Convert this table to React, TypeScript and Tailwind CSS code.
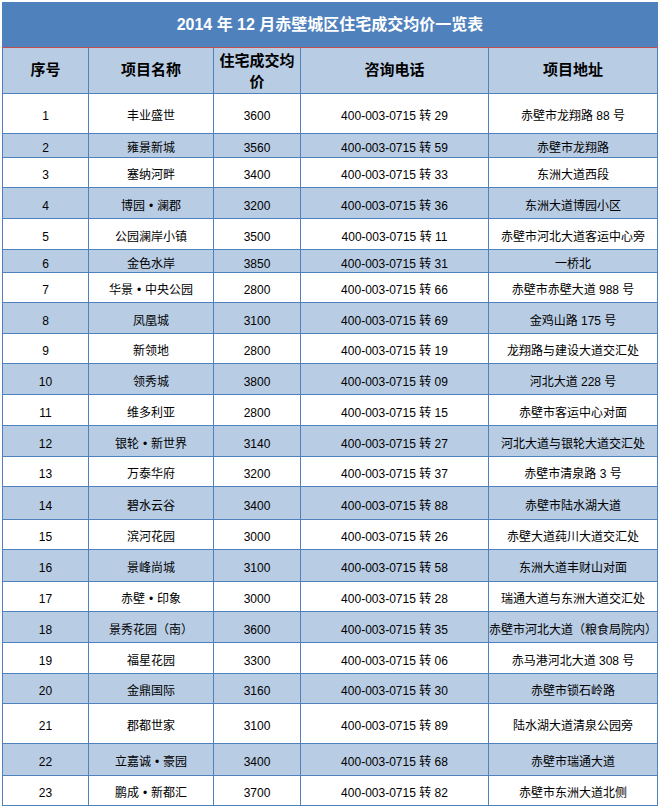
import React from "react";

type Row = {
  no: number;
  name: string;
  price: string;
  ext: string;
  addr: string;
  h: string;
};

// row heights include the 1px bottom rule
const rows: Row[] = [
  { no: 1, name: "丰业盛世", price: "3600", ext: "29", addr: "赤壁市龙翔路 88 号", h: "h-[40px]" },
  { no: 2, name: "雍景新城", price: "3560", ext: "59", addr: "赤壁市龙翔路", h: "h-[24px]" },
  { no: 3, name: "塞纳河畔", price: "3400", ext: "33", addr: "东洲大道西段", h: "h-[30px]" },
  { no: 4, name: "博园•澜郡", price: "3200", ext: "36", addr: "东洲大道博园小区", h: "h-[31px]" },
  { no: 5, name: "公园澜岸小镇", price: "3500", ext: "11", addr: "赤壁市河北大道客运中心旁", h: "h-[31px]" },
  { no: 6, name: "金色水岸", price: "3850", ext: "31", addr: "一桥北", h: "h-[23px]" },
  { no: 7, name: "华景•中央公园", price: "2800", ext: "66", addr: "赤壁市赤壁大道 988 号", h: "h-[30px]" },
  { no: 8, name: "凤凰城", price: "3100", ext: "69", addr: "金鸡山路 175 号", h: "h-[31px]" },
  { no: 9, name: "新领地", price: "2800", ext: "19", addr: "龙翔路与建设大道交汇处", h: "h-[30px]" },
  { no: 10, name: "领秀城", price: "3800", ext: "09", addr: "河北大道 228 号", h: "h-[31px]" },
  { no: 11, name: "维多利亚", price: "2800", ext: "15", addr: "赤壁市客运中心对面", h: "h-[31px]" },
  { no: 12, name: "银轮•新世界", price: "3140", ext: "27", addr: "河北大道与银轮大道交汇处", h: "h-[31px]" },
  { no: 13, name: "万泰华府", price: "3200", ext: "37", addr: "赤壁市清泉路 3 号", h: "h-[30px]" },
  { no: 14, name: "碧水云谷", price: "3400", ext: "88", addr: "赤壁市陆水湖大道", h: "h-[33px]" },
  { no: 15, name: "滨河花园", price: "3000", ext: "26", addr: "赤壁大道莼川大道交汇处", h: "h-[30px]" },
  { no: 16, name: "景峰尚城", price: "3100", ext: "58", addr: "东洲大道丰财山对面", h: "h-[32px]" },
  { no: 17, name: "赤壁•印象", price: "3000", ext: "28", addr: "瑞通大道与东洲大道交汇处", h: "h-[30px]" },
  { no: 18, name: "景秀花园（南）", price: "3600", ext: "35", addr: "赤壁市河北大道（粮食局院内）", h: "h-[31px]" },
  { no: 19, name: "福星花园", price: "3300", ext: "06", addr: "赤马港河北大道 308 号", h: "h-[31px]" },
  { no: 20, name: "金鼎国际", price: "3160", ext: "30", addr: "赤壁市锁石岭路", h: "h-[30px]" },
  { no: 21, name: "郡都世家", price: "3100", ext: "89", addr: "陆水湖大道清泉公园旁", h: "h-[40px]" },
  { no: 22, name: "立嘉诚•豪园", price: "3400", ext: "68", addr: "赤壁市瑞通大道", h: "h-[32px]" },
  { no: 23, name: "鹏成•新都汇", price: "3700", ext: "82", addr: "赤壁市东洲大道北侧", h: "h-[30px]" },
];

const cols = "grid grid-cols-[86px_125px_87px_188px_169px]";
const cell = "flex items-center justify-center border-r border-[#4f81bd] whitespace-nowrap overflow-hidden";

// the bullet sits in a full-width slot, as in the sheet
const Name = ({ text }: { text: string }) => {
  const parts = text.split("•");
  if (parts.length < 2) return <>{text}</>;
  return (
    <>
      {parts[0]}
      <span className="px-[4px]">•</span>
      {parts[1]}
    </>
  );
};

export default function App() {
  return (
    <div className="min-h-screen bg-white pl-[2px] pt-[2px] font-['Liberation_Sans','Noto_Sans_CJK_SC',sans-serif] text-black">
      <div className="w-[656px]">
        <div className="flex h-[45px] items-center justify-center bg-[#4f81bd] text-[16px] font-bold text-white">
          2014 年 12 月赤壁城区住宅成交均价一览表
        </div>
        <div className="h-px bg-[#c0504d]" />
        <div className="border-l border-[#4f81bd]">
          <div className={`${cols} h-[46px] border-b border-[#4f81bd] bg-[#b8cce4] text-[15px] font-bold`}>
            <div className={cell}>序号</div>
            <div className={cell}>项目名称</div>
            <div className={`${cell} text-center leading-[21px]`}>
              <span>
                住宅成交均
                <br />价
              </span>
            </div>
            <div className={cell}>咨询电话</div>
            <div className={cell}>项目地址</div>
          </div>
          {rows.map((r) => (
            <div
              key={r.no}
              className={`${cols} ${r.h} border-b border-[#4f81bd] text-[12px] ${
                r.no % 2 === 0 ? "bg-[#b8cce4]" : "bg-white"
              }`}
            >
              <div className={`${cell} pt-[5px]`}>{r.no}</div>
              <div className={`${cell} pt-[5px]`}>
                <Name text={r.name} />
              </div>
              <div className={`${cell} pt-[5px]`}>{r.price}</div>
              <div className={`${cell} pt-[5px]`}>400-003-0715 转 {r.ext}</div>
              <div className={`${cell} pt-[5px]`}>{r.addr}</div>
            </div>
          ))}
        </div>
      </div>
    </div>
  );
}
